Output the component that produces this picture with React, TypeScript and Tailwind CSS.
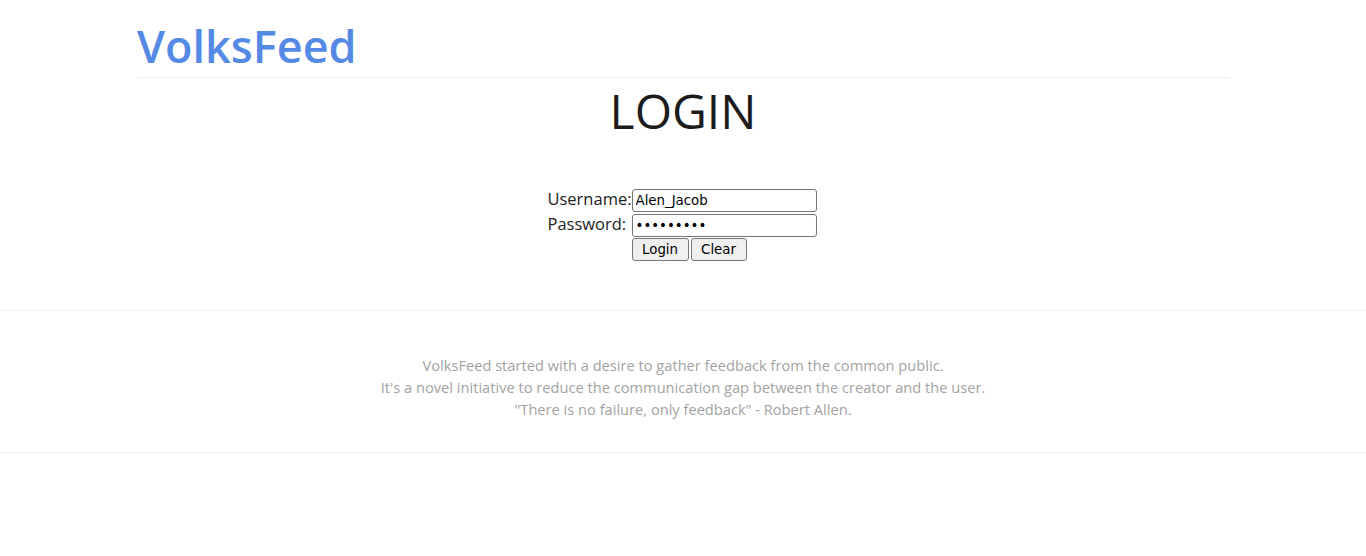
import React, { useState } from 'react';

const inputClass =
  "w-[185px] h-[23px] px-[3px] font-['DejaVu_Sans'] text-[13.33px] border border-[#767676] rounded-[3px] text-black outline-none";
const buttonClass =
  "h-[23px] font-['DejaVu_Sans'] text-[13.33px] bg-[#efefef] border border-[#767676] rounded-[3px] text-black";

const App = () => {
  const [username, setUsername] = useState('Alen_Jacob');
  const [password, setPassword] = useState('123456789');

  const handleClear = () => {
    setUsername('');
    setPassword('');
  };

  return (
    <div className="min-h-[556px] bg-white font-['Open_Sans','Noto_Sans',sans-serif]">
      <div className="w-[1092px] mx-auto">
        <div className="pt-[14px] border-b border-[#eeeeee]">
          <h1 className="text-[45px] leading-[63px] font-semibold text-[#5489e6]">VolksFeed</h1>
        </div>
        <h2 className="text-center text-[48px] leading-[66px] text-[#1c1c1c]">LOGIN</h2>
      </div>

      <form className="flex justify-center mt-[43px] pb-[49px] pr-[2px]" onSubmit={(e) => e.preventDefault()}>
        <table className="text-[16.5px] text-[#222222] border-separate border-spacing-0">
          <tbody>
            <tr>
              <td className="h-[25px]">Username:</td>
              <td>
                <input type="text" value={username} onChange={(e) => setUsername(e.target.value)} className={inputClass} />
              </td>
            </tr>
            <tr>
              <td className="h-[25px]">Password:</td>
              <td>
                <input type="password" value={password} onChange={(e) => setPassword(e.target.value)} className={inputClass} />
              </td>
            </tr>
            <tr>
              <td></td>
              <td className="pt-[1px]">
                <div className="flex gap-[2px]">
                  <button type="submit" className={`${buttonClass} w-[57px]`}>
                    Login
                  </button>
                  <button type="button" onClick={handleClear} className={`${buttonClass} w-[56px]`}>
                    Clear
                  </button>
                </div>
              </td>
            </tr>
          </tbody>
        </table>
      </form>

      <footer className="border-t border-b border-[#eeeeee] pt-[43px] pb-[32px] text-center text-[14.65px] leading-[22px] text-[#a3a3a3]">
        <p>VolksFeed started with a desire to gather feedback from the common public.</p>
        <p>It's a novel initiative to reduce the communication gap between the creator and the user.</p>
        <p>"There is no failure, only feedback" - Robert Allen.</p>
      </footer>
    </div>
  );
};

export default App;
